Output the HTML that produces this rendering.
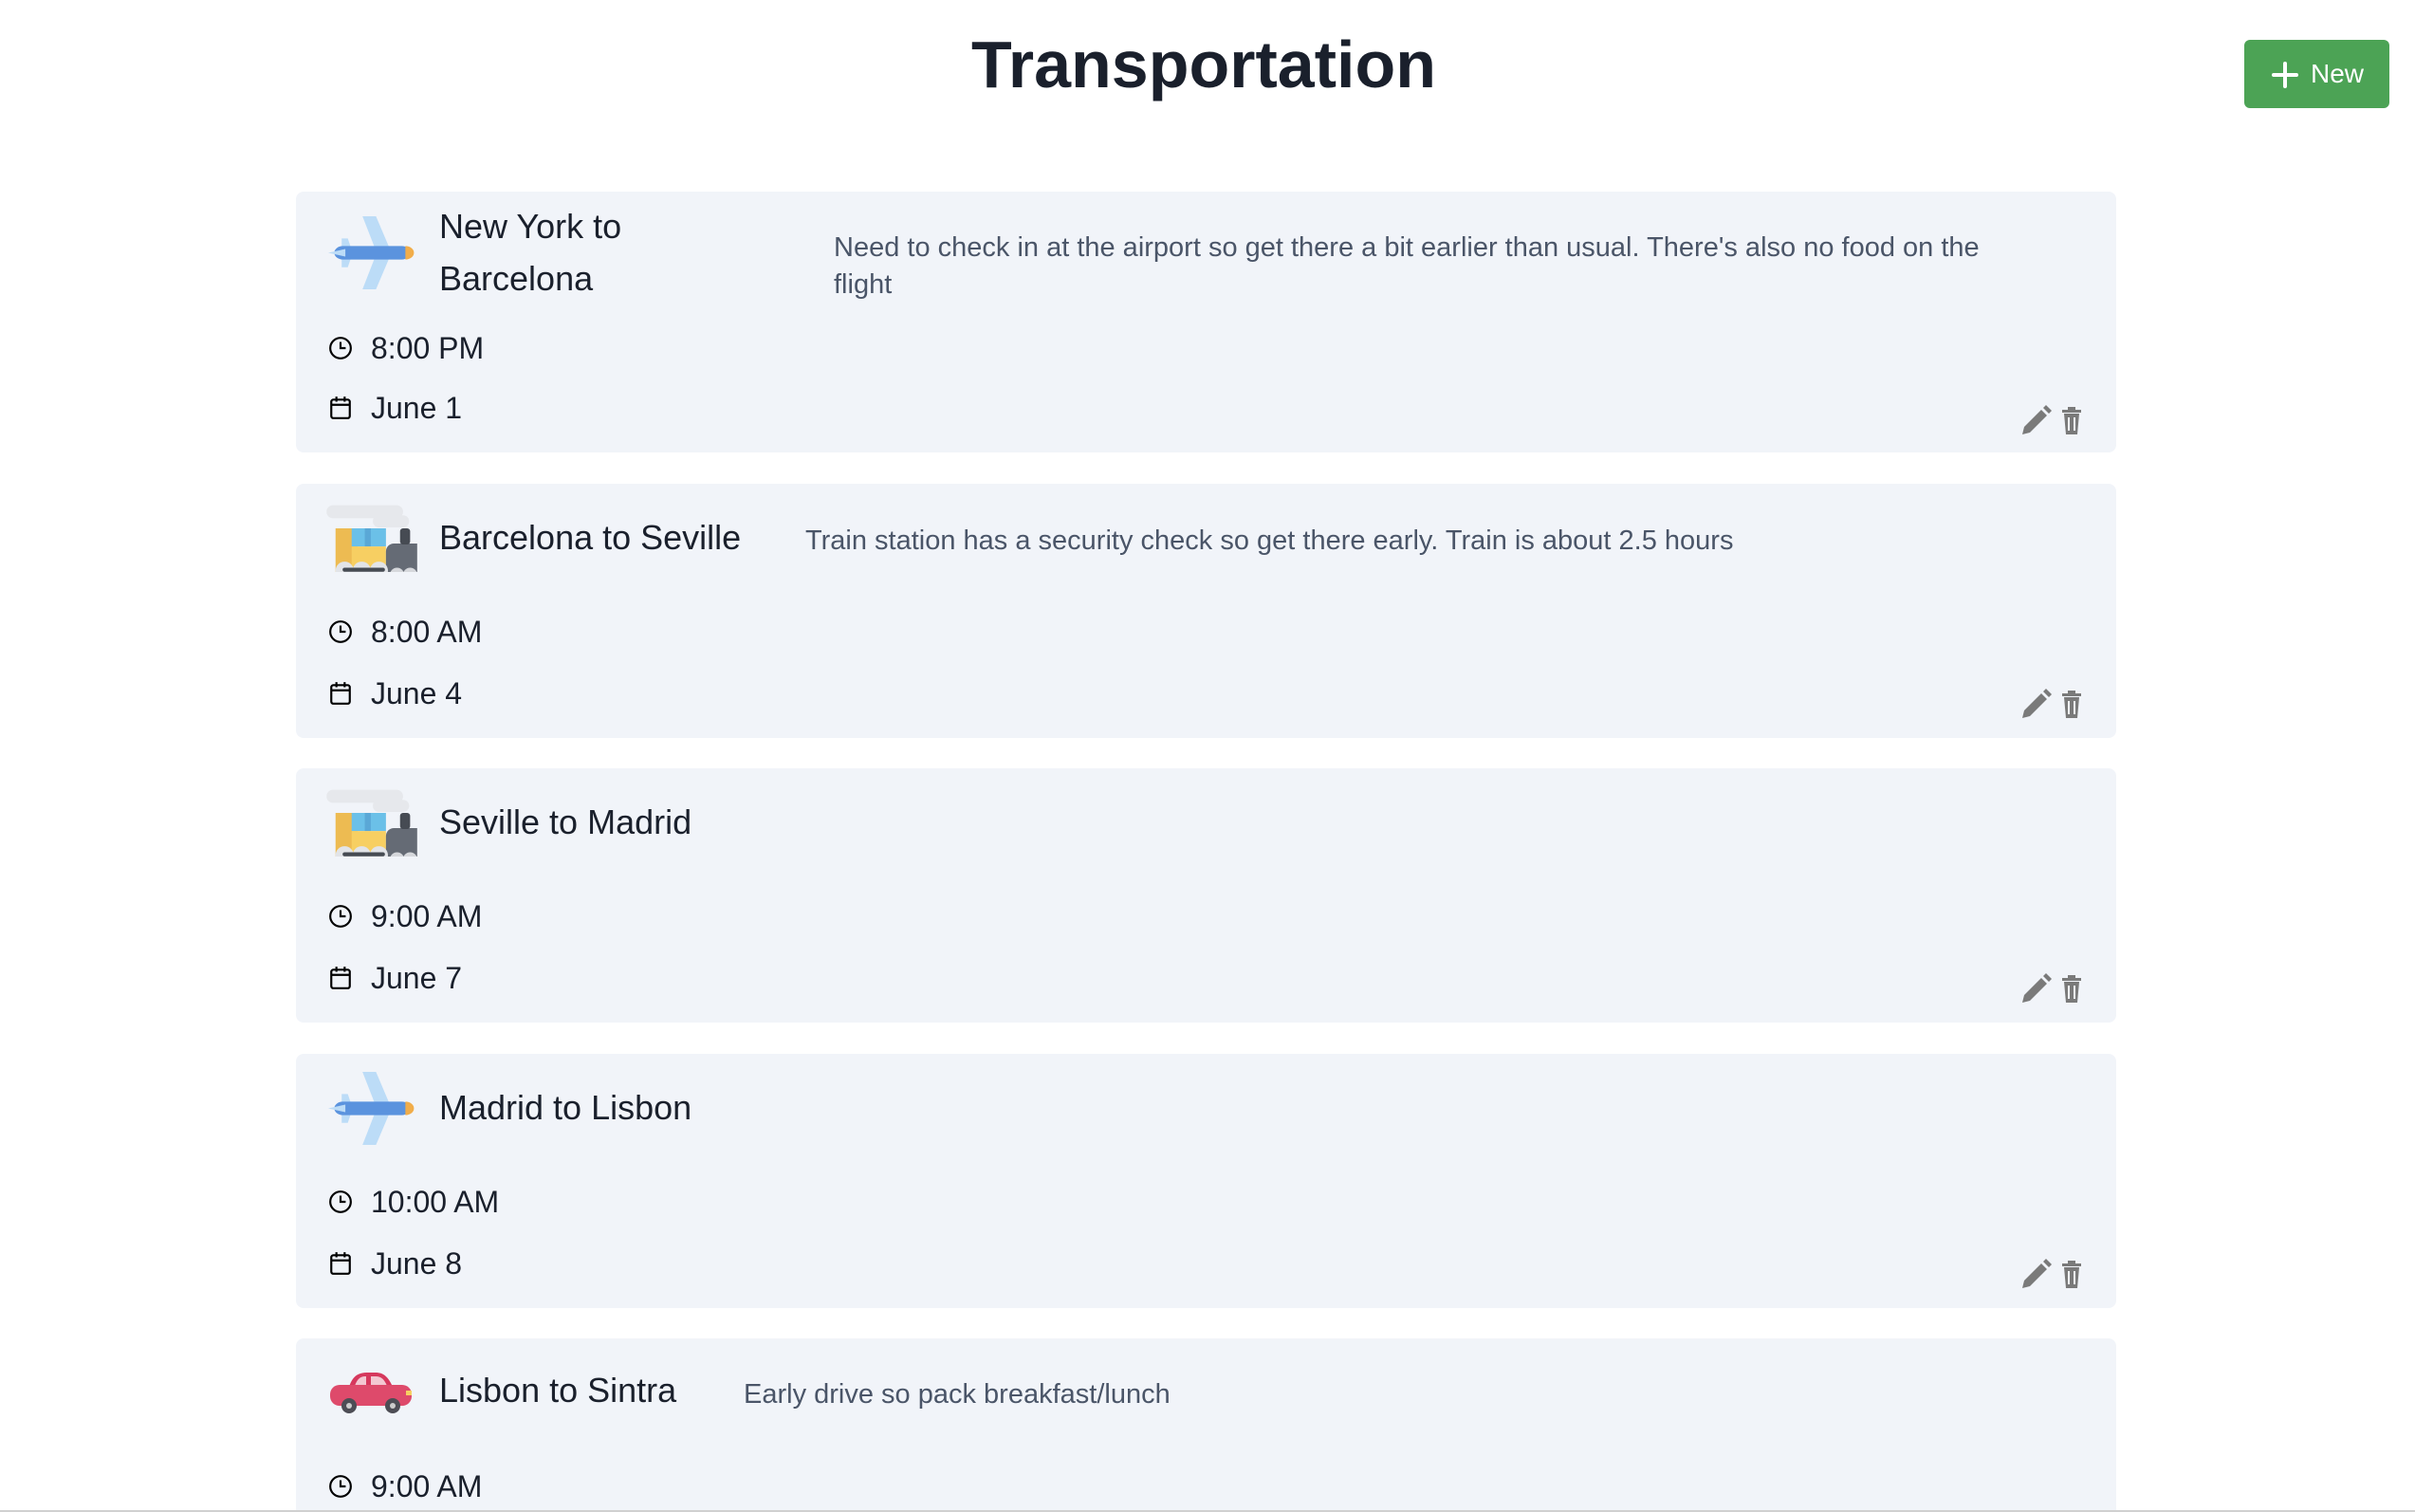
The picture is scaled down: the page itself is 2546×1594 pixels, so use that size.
<!DOCTYPE html>
<html style="width:2546px;height:1594px;overflow:hidden"><head><meta charset="utf-8"><style>
*{margin:0;padding:0;box-sizing:border-box}
body{width:2546px;height:1594px;background:#fff;font-family:"Liberation Sans",sans-serif;position:relative;overflow:hidden}
h1{position:absolute;top:24px;left:0;width:2546px;text-align:center;font-size:70px;font-weight:bold;color:#1a202c;line-height:88px;padding-right:8px}
.btn{position:absolute;left:2366px;top:42px;width:153px;height:72px;background:#4ca355;border-radius:6px;color:#fff;font-size:28px}
.btn span{position:absolute;left:70px;top:20px}
.card{position:absolute;left:312px;width:1919px;background:#f1f4f9;border-radius:8px}
.t{position:absolute;left:151px;font-size:36px;color:#1a202c;line-height:44px;height:44px;white-space:nowrap}
.d{position:absolute;font-size:29px;color:#4a5568;line-height:39px;width:1240px}
.m{position:absolute;left:79px;font-size:32px;color:#1a202c;line-height:40px;height:40px;white-space:nowrap}
.ic{position:absolute;left:34px}
.mi{position:absolute;left:34px;width:26px;height:26px}
.ed{position:absolute;left:1816px;width:70px;height:34px}
</style></head><body>
<h1>Transportation</h1>
<div class="btn"><svg style="position:absolute;left:28px;top:22px" width="30" height="30" viewBox="0 0 30 30"><path d="M15 3v24M3 15h24" stroke="#fff" stroke-width="4" stroke-linecap="round"/></svg><span>New</span></div>

<svg width="0" height="0" style="position:absolute"><defs>
<symbol id="plane" viewBox="0 0 72 80"><path d="M28 2h11l12 36-12 0z" fill="#bcdcf7"/><path d="M28 78h11l12-36-12 0z" fill="#bcdcf7"/><path d="M11 25h5l4 15-4 15h-5z" fill="#bcdcf7"/><rect x="5" y="33" width="62" height="14" rx="7" fill="#5b93de"/><path d="M0 40l14-4v8z" fill="#bcdcf7"/><path d="M63 33a7 7 0 0 1 0 14z" fill="#f1ad4a"/></symbol>
<symbol id="train" viewBox="0 0 90 70"><rect x="0" y="4" width="76" height="13" rx="6.5" fill="#e6e8ec"/><rect x="46" y="14" width="36" height="12" rx="6" fill="#e6e8ec"/><rect x="9" y="27" width="22" height="44" fill="#edbb52"/><rect x="25" y="27" width="34" height="18" fill="#6bc0e8"/><rect x="38" y="27" width="6" height="18" fill="#5aa8d6"/><rect x="25" y="45" width="34" height="21" fill="#f7cf62"/><rect x="59" y="42" width="42" height="32" rx="8" fill="#656b75"/><rect x="73" y="27" width="10" height="16" rx="3" fill="#464b53"/><rect x="92" y="45" width="8" height="10" fill="#f7cf62"/><circle cx="18" cy="69" r="9" fill="#e2e4e8"/><circle cx="35" cy="69" r="9" fill="#e2e4e8"/><circle cx="52" cy="69" r="9" fill="#e2e4e8"/><circle cx="70" cy="73" r="7" fill="#d6d8dc"/><circle cx="83" cy="73" r="7" fill="#d6d8dc"/><rect x="16" y="66" width="42" height="4" rx="2" fill="#464b53"/></symbol>
<symbol id="car" viewBox="0 0 90 50"><path d="M22 18c4-12 10-15 20-15h8c8 0 13 4 18 15z" fill="#d6385d"/><path d="M28 17c3-8 6-10 12-10v10zM45 7h5c6 0 9 3 12 10H45z" fill="#f3c8d2"/><rect x="2" y="16" width="86" height="22" rx="10" fill="#de4a6b"/><circle cx="22" cy="38" r="8" fill="#4d4d55"/><circle cx="22" cy="38" r="3" fill="#ccc"/><circle cx="68" cy="38" r="8" fill="#4d4d55"/><circle cx="68" cy="38" r="3" fill="#ccc"/><rect x="82" y="22" width="6" height="5" fill="#f7cf62"/></symbol>
<symbol id="clock" viewBox="0 0 24 24"><circle cx="12" cy="12" r="10" fill="none" stroke="#000" stroke-width="2"/><path d="M12 6v6h5" fill="none" stroke="#000" stroke-width="2"/></symbol>
<symbol id="cal" viewBox="0 0 24 24"><rect x="3" y="4" width="18" height="18" rx="2" fill="none" stroke="#000" stroke-width="2"/><path d="M3 9h18M8 1v5M16 1v5" stroke="#000" stroke-width="2"/></symbol>
<symbol id="edit" viewBox="0 0 70 34"><path d="M4 32l2-8 18-18 6 6-18 18z M26 4l3-3 6 6-3 3z" fill="#7a7a7a"/><path d="M46 6h20v3H46zM52 3h8v3h-8zM48 10h16l-2 22H50z" fill="#7a7a7a"/><path d="M53 14v14M59 14v14" stroke="#f1f4f9" stroke-width="2"/></symbol>
</defs></svg>

<div class="card" style="top:202px;height:275px">
<svg class="ic" style="top:24px" width="93" height="81" viewBox="0 0 72 80" preserveAspectRatio="none"><use href="#plane"/></svg>
<div class="t" style="top:15px">New York to</div>
<div class="t" style="top:70px">Barcelona</div>
<div class="d" style="left:567px;top:40px">Need to check in at the airport so get there a bit earlier than usual. There's also no food on the flight</div>
<svg class="mi" style="top:152px"><use href="#clock"/></svg><div class="m" style="top:145px">8:00 PM</div>
<svg class="mi" style="top:215px"><use href="#cal"/></svg><div class="m" style="top:208px">June 1</div>
<svg class="ed" style="top:224px"><use href="#edit"/></svg>
</div>

<div class="card" style="top:510px;height:268px">
<svg class="ic" style="top:18px;left:30px" width="100" height="75" viewBox="0 0 102 80"><use href="#train"/></svg>
<div class="t" style="top:35px">Barcelona to Seville</div>
<div class="d" style="left:537px;top:41px">Train station has a security check so get there early. Train is about 2.5 hours</div>
<svg class="mi" style="top:143px"><use href="#clock"/></svg><div class="m" style="top:136px">8:00 AM</div>
<svg class="mi" style="top:208px"><use href="#cal"/></svg><div class="m" style="top:201px">June 4</div>
<svg class="ed" style="top:215px"><use href="#edit"/></svg>
</div>

<div class="card" style="top:810px;height:268px">
<svg class="ic" style="top:18px;left:30px" width="100" height="75" viewBox="0 0 102 80"><use href="#train"/></svg>
<div class="t" style="top:35px">Seville to Madrid</div>
<svg class="mi" style="top:143px"><use href="#clock"/></svg><div class="m" style="top:136px">9:00 AM</div>
<svg class="mi" style="top:208px"><use href="#cal"/></svg><div class="m" style="top:201px">June 7</div>
<svg class="ed" style="top:215px"><use href="#edit"/></svg>
</div>

<div class="card" style="top:1111px;height:268px">
<svg class="ic" style="top:17px" width="93" height="81" viewBox="0 0 72 80" preserveAspectRatio="none"><use href="#plane"/></svg>
<div class="t" style="top:35px">Madrid to Lisbon</div>
<svg class="mi" style="top:143px"><use href="#clock"/></svg><div class="m" style="top:136px">10:00 AM</div>
<svg class="mi" style="top:208px"><use href="#cal"/></svg><div class="m" style="top:201px">June 8</div>
<svg class="ed" style="top:215px"><use href="#edit"/></svg>
</div>

<div class="card" style="top:1411px;height:181px;border-radius:8px 8px 0 0">
<svg class="ic" style="top:33px" width="90" height="50"><use href="#car"/></svg>
<div class="t" style="top:33px">Lisbon to Sintra</div>
<div class="d" style="left:472px;top:40px">Early drive so pack breakfast/lunch</div>
<svg class="mi" style="top:143px"><use href="#clock"/></svg><div class="m" style="top:136px">9:00 AM</div>
</div>
<div style="position:absolute;left:0;top:1592px;width:2546px;height:2px;background:#d0d0d0"></div>
</body></html>
